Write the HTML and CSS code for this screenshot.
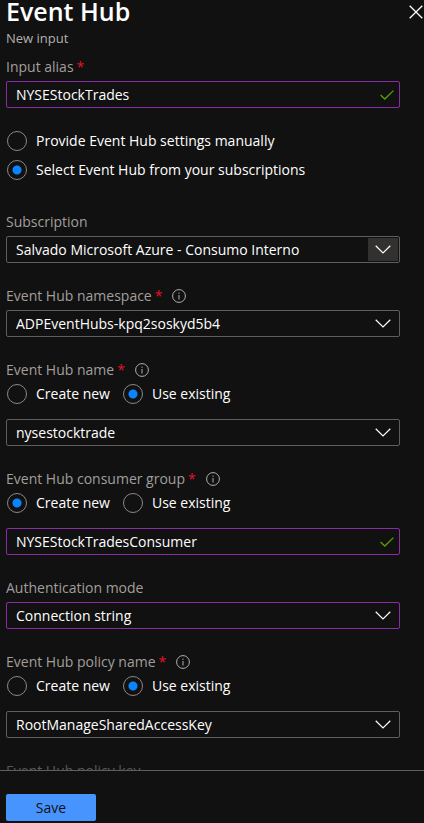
FILE: index.html
```html
<!DOCTYPE html>
<html lang="en">
<head>
<meta charset="utf-8">
<meta name="viewport" content="width=device-width, initial-scale=1">
<title>Event Hub - New input</title>
<link rel="stylesheet" href="styles.css">
</head>
<body>
<svg class="sprite" aria-hidden="true">
  <symbol id="chevron" viewBox="0 0 16 9"><path d="M.7.8 8 8 15.3.8"/></symbol>
  <symbol id="check" viewBox="0 0 14 10"><path d="M.6 5 4.8 9 13.4.6"/></symbol>
  <symbol id="info" viewBox="0 0 14 14"><circle cx="7" cy="7" r="6.4"/><path d="M7 6v4.5M7 3.6v1.2"/></symbol>
</svg>
<form class="panel">
  <header class="header">
    <div>
      <h1 class="title">Event Hub</h1>
      <p class="subtitle">New input</p>
    </div>
    <button class="close" type="button" aria-label="Close"><svg viewBox="0 0 14 14"><path d="M.7.7l12.6 12.6M13.3.7.7 13.3"/></svg></button>
  </header>
  <main class="content">
    <section class="field">
      <div class="caption"><label for="alias">Input alias</label><span class="required">*</span></div>
      <div class="control">
        <input class="box edited" id="alias" type="text" value="NYSEStockTrades">
        <svg class="check"><use href="#check"/></svg>
      </div>
    </section>
    <section class="field source">
      <label class="option"><input type="radio" name="source">Provide Event Hub settings manually</label>
      <label class="option"><input type="radio" name="source" checked>Select Event Hub from your subscriptions</label>
    </section>
    <section class="field">
      <div class="caption"><label for="subscription">Subscription</label></div>
      <div class="control">
        <select class="box" id="subscription"><option>Salvado Microsoft Azure - Consumo Interno</option></select>
        <span class="arrow active"><svg><use href="#chevron"/></svg></span>
      </div>
    </section>
    <section class="field">
      <div class="caption"><label for="namespace">Event Hub namespace</label><span class="required">*</span><svg class="info"><use href="#info"/></svg></div>
      <div class="control">
        <select class="box" id="namespace"><option>ADPEventHubs-kpq2soskyd5b4</option></select>
        <span class="arrow"><svg><use href="#chevron"/></svg></span>
      </div>
    </section>
    <section class="field">
      <div class="caption"><label for="name">Event Hub name</label><span class="required">*</span><svg class="info"><use href="#info"/></svg></div>
      <div class="choices">
        <label class="option"><input type="radio" name="hub">Create new</label>
        <label class="option"><input type="radio" name="hub" checked>Use existing</label>
      </div>
      <div class="control">
        <select class="box" id="name"><option>nysestocktrade</option></select>
        <span class="arrow"><svg><use href="#chevron"/></svg></span>
      </div>
    </section>
    <section class="field">
      <div class="caption"><label for="group">Event Hub consumer group</label><span class="required">*</span><svg class="info"><use href="#info"/></svg></div>
      <div class="choices">
        <label class="option"><input type="radio" name="consumer" checked>Create new</label>
        <label class="option"><input type="radio" name="consumer">Use existing</label>
      </div>
      <div class="control">
        <input class="box edited" id="group" type="text" value="NYSEStockTradesConsumer">
        <svg class="check"><use href="#check"/></svg>
      </div>
    </section>
    <section class="field">
      <div class="caption"><label for="auth">Authentication mode</label></div>
      <div class="control">
        <select class="box edited" id="auth"><option>Connection string</option></select>
        <span class="arrow"><svg><use href="#chevron"/></svg></span>
      </div>
    </section>
    <section class="field">
      <div class="caption"><label for="policy">Event Hub policy name</label><span class="required">*</span><svg class="info"><use href="#info"/></svg></div>
      <div class="choices">
        <label class="option"><input type="radio" name="policy-mode">Create new</label>
        <label class="option"><input type="radio" name="policy-mode" checked>Use existing</label>
      </div>
      <div class="control">
        <select class="box" id="policy"><option>RootManageSharedAccessKey</option></select>
        <span class="arrow"><svg><use href="#chevron"/></svg></span>
      </div>
    </section>
    <section class="field disabled">
      <div class="caption"><span>Event Hub policy key</span></div>
    </section>
  </main>
  <footer class="footer"><button class="save" type="submit">Save</button></footer>
</form>
</body>
</html>
```

FILE: styles.css
```css
* { box-sizing: border-box; }

body {
  margin: 0;
  background: #111;
  color: #fff;
  font: 14px/20px "Open Sans", "Noto Sans", sans-serif;
}

button, input, select { font: inherit; color: inherit; }

svg { fill: none; stroke: currentColor; }

.sprite { position: absolute; width: 0; height: 0; }

.panel { display: flex; flex-direction: column; height: 100vh; }

.header {
  display: flex;
  justify-content: space-between;
  padding: 0 1px 9px 6px;
}

.title { margin: 0 0 6px; font-size: 25px; line-height: 22px; font-weight: 600; }

.subtitle { margin: 0; color: #b3b0ad; font-size: 13px; }

.close {
  width: 14px;
  height: 14px;
  margin-top: 5px;
  padding: 0;
  border: 0;
  background: none;
}

.close svg { display: block; width: 14px; height: 14px; stroke-width: 1.3; }

.content {
  flex: 1;
  min-height: 0;
  overflow: hidden;
  padding: 0 24px 0 6px;
}

.field { margin-bottom: 23px; }

.caption {
  display: flex;
  align-items: center;
  margin-bottom: 4px;
  color: #a19f9d;
}

.required { margin-left: 3px; color: #e81123; }

.info { width: 14px; height: 14px; margin-left: 10px; color: #b3b0ad; }

.disabled { opacity: 0.5; }

.control { position: relative; }

.box {
  display: block;
  appearance: none;
  width: 100%;
  height: 27px;
  margin: 0;
  padding: 0 32px 0 9px;
  border: 1px solid #605e5c;
  border-radius: 2px;
  background: #111;
  line-height: 20px;
  outline: 0;
}

.edited { border-color: #8a2da5; }

.check {
  position: absolute;
  top: 9px;
  right: 6px;
  width: 14px;
  height: 10px;
  color: #57a300;
  stroke-width: 1.3;
}

.arrow {
  position: absolute;
  top: 2px;
  right: 2px;
  display: grid;
  place-items: center;
  width: 30px;
  height: 23px;
  pointer-events: none;
}

.arrow svg { width: 16px; height: 9px; stroke-width: 1.2; }

.active { background: #323130; }

.choices { display: flex; gap: 12px; margin-bottom: 15px; }

.source { display: grid; gap: 9px; margin-bottom: 32px; }

.option { display: flex; align-items: center; gap: 9px; }

.option input {
  appearance: none;
  width: 20px;
  height: 20px;
  margin: 0 0 0 1px;
  border: 1px solid #8a8886;
  border-radius: 50%;
}

.option input:checked { background: radial-gradient(circle, #0a84ff 4px, transparent 5px); }

.footer { padding: 23px 6px 2px; border-top: 1px solid #605e5c; }

.save {
  display: block;
  width: 90px;
  height: 27px;
  padding: 0;
  border: 0;
  border-radius: 2px;
  background: #4894fe;
  color: #111;
}
```
